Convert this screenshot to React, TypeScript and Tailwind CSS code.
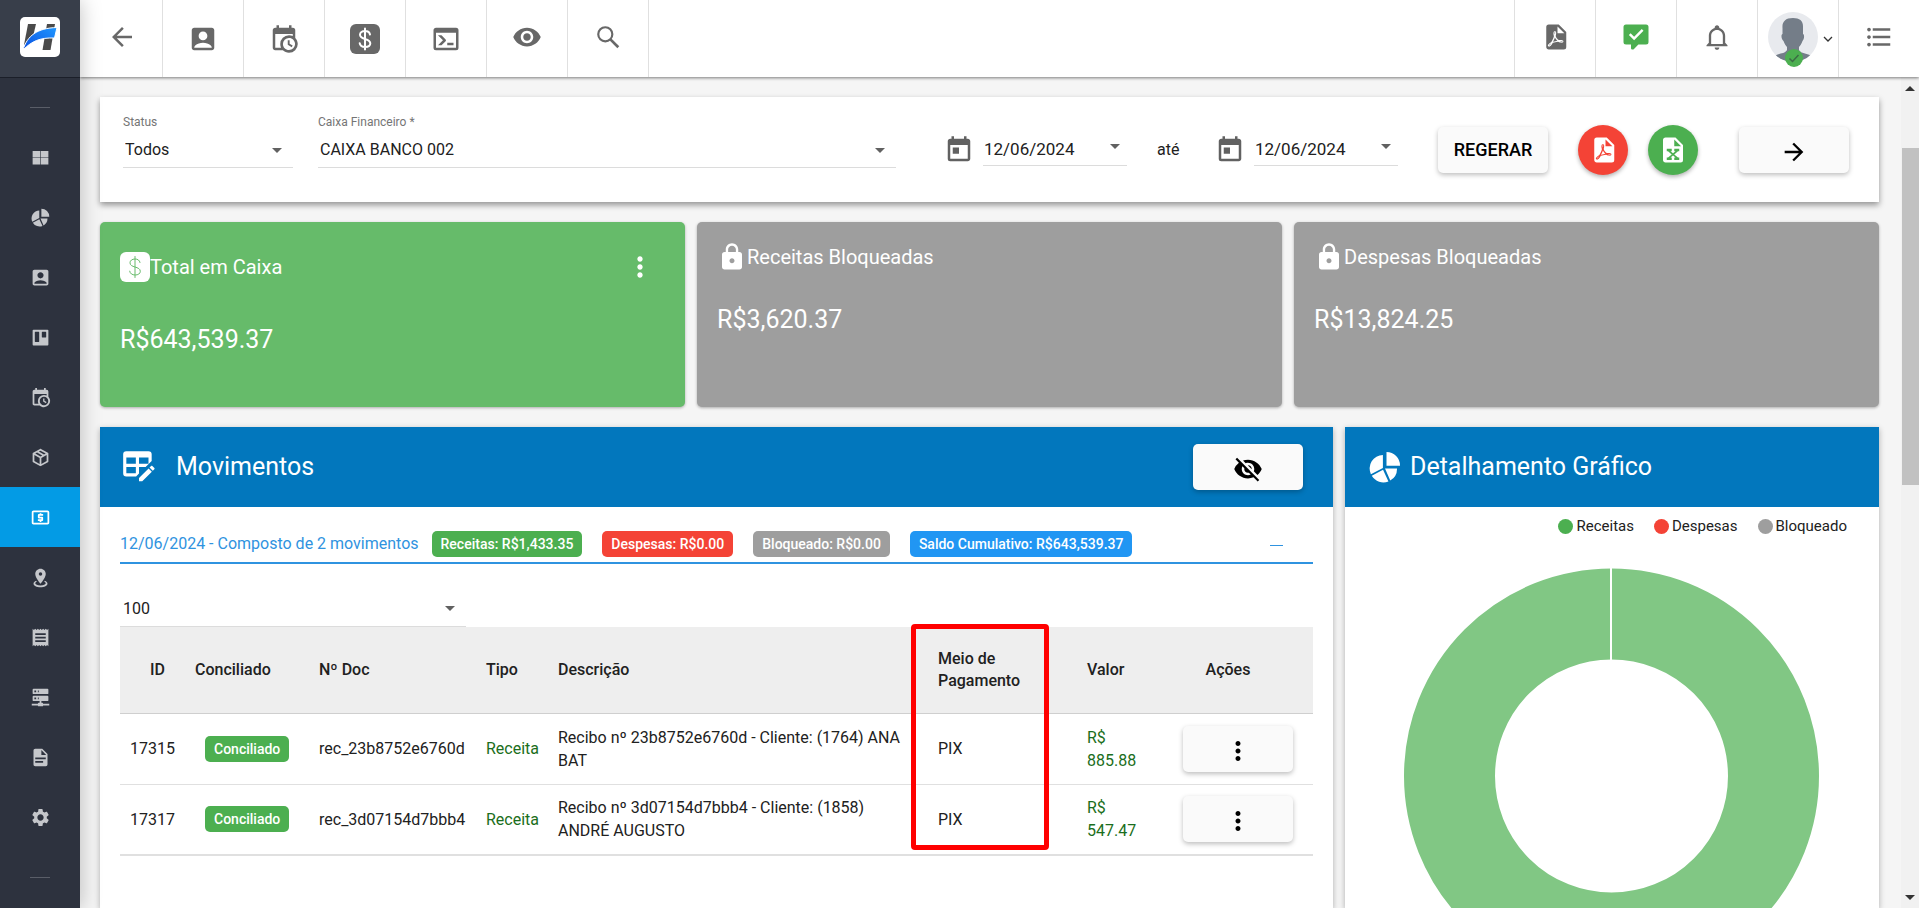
import { ReactNode, useState } from "react";
import {
    MdAccountBox,
    MdArrowBack,
    MdArrowDropDown,
    MdArrowForward,
    MdFormatListBulleted,
    MdLocalAtm,
    MdLock,
    MdMoreVert,
    MdReceipt,
    MdSettings,
    MdToday,
    MdVisibility,
    MdVisibilityOff,
} from "react-icons/md";

const paths = {
    calendarClock: "M15,13H16.5V15.82L18.94,17.23L18.19,18.53L15,16.69V13M19,8H5V19H9.67C9.24,18.09 9,17.07 9,16A7,7 0 0,1 16,9C17.07,9 18.09,9.24 19,9.67V8M5,21C3.89,21 3,20.1 3,19V5C3,3.89 3.89,3 5,3H6V1H8V3H16V1H18V3H19A2,2 0 0,1 21,5V11.1C22.24,12.36 23,14.09 23,16A7,7 0 0,1 16,23C14.09,23 12.36,22.24 11.1,21H5M16,11.15A4.85,4.85 0 0,0 11.15,16C11.15,18.68 13.32,20.85 16,20.85A4.85,4.85 0 0,0 20.85,16C20.85,13.32 18.68,11.15 16,11.15Z",
    console: "M20,19V7H4V19H20M20,3A2,2 0 0,1 22,5V19A2,2 0 0,1 20,21H4A2,2 0 0,1 2,19V5C2,3.89 2.9,3 4,3H20M13,17V15H18V17H13M9.58,13L5.57,9H8.4L11.7,12.3C12.09,12.69 12.09,13.33 11.7,13.72L8.42,17H5.59L9.58,13Z",
    pdf: "M14,9H19.5L14,3.5V9M7,2H15L21,8V20A2,2 0 0,1 19,22H7C5.89,22 5,21.1 5,20V4A2,2 0 0,1 7,2M11.93,12.44C12.34,13.34 12.86,14.08 13.46,14.59L13.87,14.91C13,15.07 11.8,15.35 10.53,15.84V15.84L10.42,15.88L10.92,14.84C11.37,13.97 11.7,13.18 11.93,12.44M18.41,16.25C18.59,16.07 18.68,15.84 18.69,15.59C18.72,15.39 18.67,15.2 18.57,15.04C18.28,14.57 17.53,14.35 16.29,14.35L15,14.42L14.13,13.84C13.5,13.32 12.93,12.41 12.53,11.28L12.57,11.14C12.9,9.81 13.21,8.2 12.55,7.54C12.39,7.38 12.17,7.3 11.94,7.3H11.7C11.33,7.3 11,7.69 10.91,8.07C10.54,9.4 10.76,10.13 11.13,11.34V11.35C10.88,12.23 10.56,13.25 10.05,14.28L9.09,16.08L8.2,16.57C7,17.32 6.43,18.16 6.32,18.69C6.28,18.88 6.3,19.05 6.37,19.23L6.4,19.28L6.88,19.59L7.32,19.7C8.13,19.7 9.05,18.75 10.29,16.63L10.47,16.56C11.5,16.23 12.78,16 14.5,15.81C15.53,16.32 16.74,16.55 17.5,16.55C17.94,16.55 18.24,16.44 18.41,16.25M18,15.54L18.09,15.65C18.08,15.75 18.05,15.76 18,15.78H17.96L17.77,15.8C17.31,15.8 16.6,15.61 15.87,15.29C15.96,15.19 16,15.19 16.1,15.19C17.5,15.19 17.9,15.44 18,15.54M8.83,17C8.18,18.19 7.59,18.85 7.14,19C7.19,18.62 7.64,17.96 8.35,17.31L8.83,17M11.85,10.09C11.62,9.19 11.61,8.46 11.78,8.04L11.85,7.92L12,7.97C12.17,8.21 12.19,8.53 12.09,9.07L12.06,9.23L11.9,10.05L11.85,10.09Z",
    excel: "M13,9H18.5L13,3.5V9M6,2H14L20,8V20A2,2 0 0,1 18,22H6C4.89,22 4,21.1 4,20V4C4,2.89 4.89,2 6,2M17,11H13V13H14L12,14.67L10,13H11V11H7V13H8L11,15.5L8,18H7V20H11V18H10L12,16.33L14,18H13V20H17V18H16L13,15.5L16,13H17V11Z",
    document: "M13,9H18.5L13,3.5V9M6,2H14L20,8V20A2,2 0 0,1 18,22H6C4.89,22 4,21.1 4,20V4C4,2.89 4.89,2 6,2M15,18V16H6V18H15M18,14V12H6V14H18Z",
    messageCheck: "M4,2H20A2,2 0 0,1 22,4V16A2,2 0 0,1 20,18H13.9L10.2,21.7C10,21.9 9.75,22 9.5,22H9A1,1 0 0,1 8,21V18H4A2,2 0 0,1 2,16V4A2,2 0 0,1 4,2M16.6,5.5L10.5,11.7L7.7,8.9L6.3,10.3L10.5,14.5L18,6.9Z",
    bell: "M10 21H14C14 22.1 13.1 23 12 23S10 22.1 10 21M21 19V20H3V19L5 17V11C5 7.9 7 5.2 10 4.3V4C10 2.9 10.9 2 12 2S14 2.9 14 4V4.3C17 5.2 19 7.9 19 11V17L21 19M17 11C17 8.2 14.8 6 12 6S7 8.2 7 11V18H17V11Z",
    pie: "M13 2V11.2H22A9 9 0 0 0 13 2ZM10.6 4A9 9 0 0 0 2.6 16.8L10.6 12.6ZM3.2 17.9A9 9 0 0 0 14.3 21.6L10.7 13.9ZM15.5 21A9 9 0 0 0 20 13H12Z",
    windows: "M3,4.500H11.600V11.700H3V4.500M12.300,4.500H21V11.700H12.300V4.500M3,12.300H11.600V20H3V12.300M12.300,12.300H21V20H12.300V12.300Z",
    board: "M4,3H20A1,1 0 0,1 21,4V20A1,1 0 0,1 20,21H4A1,1 0 0,1 3,20V4A1,1 0 0,1 4,3M6,5.5A.5,.5 0 0,0 5.5,6V16.5A.5,.5 0 0,0 6,17H10A.5,.5 0 0,0 10.5,16.5V6A.5,.5 0 0,0 10,5.5H6M14,5.5A.5,.5 0 0,0 13.5,6V11.5A.5,.5 0 0,0 14,12H18A.5,.5 0 0,0 18.5,11.5V6A.5,.5 0 0,0 18,5.5H14Z",
    box: "M21,16.5C21,16.88 20.79,17.21 20.47,17.38L12.57,21.82C12.41,21.94 12.21,22 12,22C11.79,22 11.59,21.94 11.43,21.82L3.53,17.38C3.21,17.21 3,16.88 3,16.5V7.5C3,7.12 3.21,6.79 3.53,6.62L11.43,2.18C11.59,2.06 11.79,2 12,2C12.21,2 12.41,2.06 12.57,2.18L20.47,6.62C20.79,6.79 21,7.12 21,7.5V16.5M12,4.15L10.11,5.22L16,8.61L17.96,7.5L12,4.15M6.04,7.5L12,10.85L13.96,9.75L8.08,6.35L6.04,7.5M5,15.91L11,19.29V12.58L5,9.21V15.91M19,15.91V9.21L13,12.58V19.29L19,15.91Z",
    marker: "M12,2C15.31,2 18,4.66 18,7.95C18,12.41 12,19 12,19C12,19 6,12.41 6,7.95C6,4.66 8.69,2 12,2M12,6A2,2 0 0,0 10,8A2,2 0 0,0 12,10A2,2 0 0,0 14,8A2,2 0 0,0 12,6M20,19C20,21.21 16.42,23 12,23C7.58,23 4,21.21 4,19C4,17.71 5.22,16.56 7.11,15.83L7.75,16.74C6.67,17.19 6,17.81 6,18.5C6,19.88 8.69,21 12,21C15.31,21 18,19.88 18,18.5C18,17.81 17.33,17.19 16.25,16.74L16.89,15.83C18.78,16.56 20,17.71 20,19Z",
    server: "M13,18H14A1,1 0 0,1 15,19H22V21H15A1,1 0 0,1 14,22H10A1,1 0 0,1 9,21H2V19H9A1,1 0 0,1 10,18H11V16H4A1,1 0 0,1 3,15V11A1,1 0 0,1 4,10H20A1,1 0 0,1 21,11V15A1,1 0 0,1 20,16H13V18M4,2H20A1,1 0 0,1 21,3V7A1,1 0 0,1 20,8H4A1,1 0 0,1 3,7V3A1,1 0 0,1 4,2M9,6H10V4H9V6M9,14H10V12H9V14M5,4V6H7V4H5M5,12V14H7V12H5Z",
    tableEdit: "M21.7,13.35L20.7,14.35L18.65,12.3L19.65,11.3C19.86,11.08 20.21,11.08 20.42,11.3L21.7,12.58C21.92,12.79 21.92,13.14 21.7,13.35M12,18.94L18.07,12.88L20.12,14.93L14.06,21H12V18.94M4,2H18A2,2 0 0,1 20,4V8.17L16.17,12H12V16.17L10.17,18H4A2,2 0 0,1 2,16V4A2,2 0 0,1 4,2M4,6V10H10V6H4M12,6V10H18V6H12M4,12V16H10V12H4Z",
}

function Icon({ d, className }: { d: string, className: string }) {
    return (
        <svg viewBox="0 0 24 24" fill="currentColor" fillRule="evenodd" className={className} aria-hidden="true">
            <path d={d} />
        </svg>
    )
}

// rounded square with a dollar sign, shared by the top bar and the balance card
function DollarBox({ stroke, width, className }: { stroke: string, width: number, className: string }) {
    return (
        <svg viewBox="0 0 30 30" className={className} aria-hidden="true">
            <rect width="30" height="30" rx="6" fill="currentColor" />
            <path
                d="M20 10.5C19.6 8.2 17.6 7 15 7C12.2 7 10 8.5 10 10.8C10 13.3 12.3 14.2 15 15C17.9 15.9 20.3 16.8 20.3 19.3C20.3 21.7 18 23 15.2 23C12.2 23 10 21.6 9.7 19.2M15 4.5V25.5"
                fill="none"
                stroke={stroke}
                strokeWidth={width}
                strokeLinecap="round"
            />
        </svg>
    )
}

function Logo() {
    return (
        <svg viewBox="0 0 40 40" className="size-10" aria-label="Logo" role="img">
            <defs>
                <linearGradient id="swoosh" x1="0" y1="1" x2="1" y2="0">
                    <stop offset="0" stopColor="#0b4fe0" />
                    <stop offset="1" stopColor="#1f97ff" />
                </linearGradient>
            </defs>
            <rect width="40" height="40" rx="5" fill="#fff" />
            <path d="M8 7H16L12 24L4 28Z" fill="#4a4a4a" />
            <path d="M27 7H35L30.5 33H22.5Z" fill="#4a4a4a" />
            <path d="M3 33C7 19 17 11 37 10.500L34.500 21C20 20.500 12 24 3 33Z" fill="url(#swoosh)" stroke="#fff" strokeWidth="1" />
        </svg>
    )
}

function Avatar() {
    return (
        <span className="relative block size-[50px]">
            <svg viewBox="0 0 50 50" className="size-[50px]" aria-hidden="true">
                <clipPath id="face"><circle cx="25" cy="25" r="25" /></clipPath>
                <circle cx="25" cy="25" r="25" fill="#e8eaee" />
                <g clipPath="url(#face)" fill="#747d88">
                    <path d="M25 6C17 6 14 10 14.5 16V22C13 22 13 27 15.5 29C16.5 32 18 34 19 35V38C17 42 11 41 7.5 43.5C11 48 18 50 25 50C32 50 39 48 42.5 43.5C39 41 33 42 31 38V35C32 34 33.5 32 34.5 29C36.5 27 36.5 22 35 22V16C35.5 9 32 6 25 6Z" />
                </g>
            </svg>
            <svg viewBox="0 0 18 18" className="absolute -bottom-[5px] left-[17px] size-[18px]" aria-hidden="true">
                <circle cx="9" cy="9" r="9" fill="#4caf50" />
                <path d="M4.5 9.5L7.5 12.5L13.5 6" fill="none" stroke="#3b6b45" strokeWidth="1.5" />
            </svg>
        </span>
    )
}

const shortcuts = [
    { label: "Voltar", icon: <MdArrowBack className="mb-[3px] size-[30px]" /> },
    { label: "Contatos", icon: <MdAccountBox className="mt-px size-[30px]" /> },
    { label: "Agenda", icon: <Icon d={paths.calendarClock} className="mt-px size-[30px]" /> },
    { label: "Caixa", icon: <DollarBox stroke="#fff" width={2} className="mt-px size-[30px]" /> },
    { label: "Console", icon: <Icon d={paths.console} className="mt-px size-[30px]" /> },
    { label: "Visualizar", icon: <MdVisibility className="mb-[3px] size-[30px]" /> },
    {
        label: "Pesquisar",
        icon: (
            <svg viewBox="0 0 24 24" className="mb-[3px] size-[26px]" fill="none" stroke="currentColor" strokeWidth="2" aria-hidden="true">
                <circle cx="9.5" cy="9.5" r="6.5" />
                <path d="M14 14L21.5 21.5" strokeWidth="2.5" />
            </svg>
        ),
    },
]

const menu = [
    { label: "Painel", icon: <Icon d={paths.windows} className="size-[21px]" /> },
    { label: "Relatórios", icon: <Icon d={paths.pie} className="size-[21px]" /> },
    { label: "Clientes", icon: <MdAccountBox className="size-[21px]" /> },
    { label: "Quadros", icon: <Icon d={paths.board} className="size-[21px]" /> },
    { label: "Agenda", icon: <Icon d={paths.calendarClock} className="size-[21px]" /> },
    { label: "Produtos", icon: <Icon d={paths.box} className="size-[21px]" /> },
    { label: "Financeiro", icon: <MdLocalAtm className="size-[21px]" />, active: true },
    { label: "Locais", icon: <Icon d={paths.marker} className="size-[21px]" /> },
    { label: "Recibos", icon: <MdReceipt className="size-[21px]" /> },
    { label: "Rede", icon: <Icon d={paths.server} className="size-[21px]" /> },
    { label: "Documentos", icon: <Icon d={paths.document} className="size-[21px]" /> },
    { label: "Configurações", icon: <MdSettings className="size-[21px]" /> },
]

const movimentos = [
    { id: 17315, doc: "rec_23b8752e6760d", descricao: "Recibo nº 23b8752e6760d - Cliente: (1764) ANA BAT", valor: "R$ 885.88" },
    { id: 17317, doc: "rec_3d07154d7bbb4", descricao: "Recibo nº 3d07154d7bbb4 - Cliente: (1858) ANDRÉ AUGUSTO", valor: "R$ 547.47" },
]

const raised = "flex h-[46px] w-[110px] shrink-0 items-center justify-center rounded-[5px] bg-[#fafafa] text-black shadow-[0_2px_5px_rgba(0,0,0,0.26)]"

function Sidebar() {
    return (
        <aside className="z-20 flex w-20 shrink-0 flex-col bg-[#2d323e] shadow-[0_0_20px_rgba(0,0,0,0.25)]">
            <div className="flex h-[78px] shrink-0 items-center justify-center border-b border-[#1b1f29] bg-[#383e4a] pb-1">
                <Logo />
            </div>
            <nav className="flex flex-col items-center">
                <div className="mt-[29px] mb-[19px] h-px w-5 bg-[#5a5e68]" />
                {menu.map((item) => (
                    <a
                        key={item.label}
                        href="#"
                        aria-label={item.label}
                        className={item.active
                            ? "flex h-15 w-full items-center justify-center bg-[#039be5] text-white"
                            : "flex h-15 w-full items-center justify-center text-[#c5c7cb]"}
                    >
                        {item.icon}
                    </a>
                ))}
                <div className="mt-[30px] h-px w-5 bg-[#5a5e68]" />
            </nav>
        </aside>
    )
}

function TopBar() {
    const cell = "flex h-full w-[81px] items-center justify-center border-[#e0e0e0]"
    return (
        <header className="z-10 flex h-[77px] shrink-0 justify-between bg-white pl-0.5 text-[#686868] shadow-[0_1px_3px_rgba(0,0,0,0.5)]">
            <div className="flex">
                {shortcuts.map((item) => (
                    <button key={item.label} aria-label={item.label} className={`${cell} border-r`}>{item.icon}</button>
                ))}
            </div>
            <div className="flex">
                <button aria-label="Exportar PDF" className={`${cell} border-l`}><Icon d={paths.pdf} className="mb-[3px] size-[30px]" /></button>
                <button aria-label="Mensagens" className={`${cell} border-l text-[#4caf50]`}><Icon d={paths.messageCheck} className="mb-[3px] size-[30px]" /></button>
                <button aria-label="Notificações" className={`${cell} border-l`}><Icon d={paths.bell} className="mb-[3px] size-[28px]" /></button>
                <button aria-label="Perfil" className={`${cell} gap-[5px] border-l pl-1`}>
                    <span className="mb-[3px]"><Avatar /></span>
                    <svg viewBox="0 0 10 6" className="h-1.5 w-2.5" fill="none" stroke="#333" strokeWidth="1.3" aria-hidden="true"><path d="M1 1L5 5L9 1" /></svg>
                </button>
                <button aria-label="Lista" className={`${cell} border-l`}><MdFormatListBulleted className="mb-[3px] size-[30px]" /></button>
            </div>
        </header>
    )
}

function Field({ id, label, option, className }: { id: string, label: string, option: string, className: string }) {
    return (
        <div className={className}>
            <label htmlFor={id} className="block pt-[18px] text-xs leading-[14px] text-[#757575]">{label}</label>
            <div className="relative mt-[3px] border-b border-[#dcdcdc]">
                <select id={id} className="h-[35px] w-full appearance-none bg-transparent pl-0.5 text-base leading-5 outline-none">
                    <option>{option}</option>
                </select>
                <MdArrowDropDown className="pointer-events-none absolute top-1.5 right-1 size-6 text-[#616161]" />
            </div>
        </div>
    )
}

function DateField({ label }: { label: string }) {
    const [value, setValue] = useState("12/06/2024")
    return (
        <div className="flex items-center gap-[9px]">
            <MdToday className="size-[30px] text-[#616161]" />
            <div className="flex h-8 w-36 items-start justify-between border-b border-[#dcdcdc]">
                <input aria-label={label} value={value} onChange={(e) => setValue(e.target.value)} className="h-[30px] w-28 bg-transparent pl-px text-[17px] outline-none" />
                <button aria-label="Abrir calendário" className="h-6 text-[#616161]"><MdArrowDropDown className="size-6" /></button>
            </div>
        </div>
    )
}

function Filters() {
    return (
        <section className="flex h-[105px] bg-white pr-[30px] pl-[23px] shadow-[0_3px_6px_rgba(0,0,0,0.4)]">
            <Field id="status" label="Status" option="Todos" className="w-[170px]" />
            <Field id="caixa" label="Caixa Financeiro *" option="CAIXA BANCO 002" className="ml-[25px] flex-1" />
            <div className="ml-12 flex items-center">
                <DateField label="Data inicial" />
                <span className="w-[88px] pl-[30px] text-base">até</span>
                <DateField label="Data final" />
                <button className={`${raised} ml-10 text-lg font-medium`}>REGERAR</button>
                <button aria-label="Gerar PDF" className="ml-[30px] flex size-[50px] items-center justify-center rounded-full bg-[#f44336] text-white shadow-[0_2px_4px_rgba(0,0,0,0.3)]">
                    <Icon d={paths.pdf} className="size-[30px]" />
                </button>
                <button aria-label="Gerar Excel" className="ml-5 flex size-[50px] items-center justify-center rounded-full bg-[#4caf50] text-white shadow-[0_2px_4px_rgba(0,0,0,0.3)]">
                    <Icon d={paths.excel} className="size-[30px]" />
                </button>
                <button aria-label="Avançar" className={`${raised} ml-[41px] pt-1`}><MdArrowForward className="size-7" /></button>
            </div>
        </section>
    )
}

function SummaryCard({ title, value, icon, color, menu }: { title: string, value: string, icon: ReactNode, color: string, menu?: boolean }) {
    return (
        <div className={`h-[185px] rounded-[5px] p-5 text-white shadow-[0_1px_3px_rgba(0,0,0,0.3)] ${color}`}>
            <div className="flex items-center">
                {icon}
                <h2 className="flex-1 text-xl leading-[30px]">{title}</h2>
                {menu && (
                    <button aria-label="Mais opções" className="flex size-[50px] items-center justify-center"><MdMoreVert className="size-8" /></button>
                )}
            </div>
            <p className="mt-8 text-[25px] leading-8">{value}</p>
        </div>
    )
}

function Badge({ children, className }: { children: ReactNode, className: string }) {
    return <span className={`inline-block rounded-[5px] px-[9px] text-sm leading-[26px] font-medium text-white ${className}`}>{children}</span>
}

function Movimentos() {
    return (
        <section className="min-w-0 flex-1 bg-white shadow-[0_2px_6px_rgba(0,0,0,0.3)]">
            <div className="flex h-20 items-center bg-[#0277bd] pr-[30px] pl-5 text-white">
                <Icon d={paths.tableEdit} className="size-[38px]" />
                <h2 className="ml-[18px] flex-1 text-[25px]">Movimentos</h2>
                <button aria-label="Ocultar" className={raised}><MdVisibilityOff className="mt-1 size-[30px]" /></button>
            </div>
            <div className="px-5 pt-6">
                <div className="flex items-start border-b-2 border-[#2f93e0] pb-[5px] text-[#2f93e0]">
                    <span className="mr-[13px] leading-[26px]">12/06/2024 - Composto de 2 movimentos</span>
                    <div className="flex gap-5">
                        <Badge className="bg-[#4caf50]">Receitas: R$1,433.35</Badge>
                        <Badge className="bg-[#f44336]">Despesas: R$0.00</Badge>
                        <Badge className="bg-[#9e9e9e]">Bloqueado: R$0.00</Badge>
                        <Badge className="bg-[#2196f3]">Saldo Cumulativo: R$643,539.37</Badge>
                    </div>
                    <button aria-label="Recolher" className="mr-[30px] ml-auto flex h-[26px] items-center pt-0.5"><span className="h-px w-[13px] bg-[#2f93e0]" /></button>
                </div>
                <div className="relative mt-7 w-[346px] border-b border-[#dcdcdc]">
                    <select aria-label="Itens por página" className="h-[34px] w-full appearance-none bg-transparent pl-[3px] text-base outline-none">
                        <option>100</option>
                    </select>
                    <MdArrowDropDown className="pointer-events-none absolute top-1 right-1 size-6 text-[#616161]" />
                </div>
                <div className="relative">
                    <table className="w-full table-fixed border-b-2 border-[#e0e0e0] text-left">
                        <colgroup>
                            <col className="w-[65px]" />
                            <col className="w-[124px]" />
                            <col className="w-[167px]" />
                            <col className="w-[72px]" />
                            <col />
                            <col className="w-[149px]" />
                            <col className="w-[96px]" />
                            <col className="w-[140px]" />
                        </colgroup>
                        <thead>
                            <tr className="h-[86px] border-b border-[#cfcfcf] bg-[#eeeeee] leading-[22px]">
                                <th className="pr-5 text-right font-medium">ID</th>
                                <th className="px-2.5 font-medium">Conciliado</th>
                                <th className="px-2.5 font-medium">Nº Doc</th>
                                <th className="px-2.5 font-medium">Tipo</th>
                                <th className="px-2.5 font-medium">Descrição</th>
                                <th className="px-2.5 pr-10 font-medium">Meio de Pagamento</th>
                                <th className="px-2.5 font-medium">Valor</th>
                                <th className="pr-[30px] text-center font-medium">Ações</th>
                            </tr>
                        </thead>
                        <tbody>
                            {movimentos.map((mov) => (
                                <tr key={mov.id} className="h-[71px] border-b border-[#e0e0e0] leading-[23px]">
                                    <td className="pr-2.5 text-right">{mov.id}</td>
                                    <td className="pl-5"><Badge className="bg-[#4caf50]">Conciliado</Badge></td>
                                    <td className="px-2.5">{mov.doc}</td>
                                    <td className="px-2.5 text-[#1b6e20]">Receita</td>
                                    <td className="px-2.5">{mov.descricao}</td>
                                    <td className="px-2.5">PIX</td>
                                    <td className="px-2.5 pr-7 text-[#1b6e20]">{mov.valor}</td>
                                    <td className="pl-2.5"><button aria-label="Ações do movimento" className={`${raised} pt-1`}><MdMoreVert className="size-[30px]" /></button></td>
                                </tr>
                            ))}
                        </tbody>
                    </table>
                    <div className="pointer-events-none absolute -top-[3px] right-[264px] bottom-1.5 w-[138px] rounded-sm border-[5px] border-[#ff0000]" />
                </div>
            </div>
        </section>
    )
}

function Detalhamento() {
    return (
        <section className="w-[534px] shrink-0 bg-white shadow-[0_2px_6px_rgba(0,0,0,0.3)]">
            <div className="flex h-20 items-center bg-[#0277bd] pl-[22px] text-white">
                <Icon d={paths.pie} className="size-[36px]" />
                <h2 className="ml-[7px] text-[25px]">Detalhamento Gráfico</h2>
            </div>
            <ul className="flex justify-end gap-5 pt-[9px] pr-8 text-[15px] leading-5">
                <li className="flex items-center gap-[3px]"><span className="size-[15px] rounded-full bg-[#4caf50]" />Receitas</li>
                <li className="flex items-center gap-[3px]"><span className="size-[15px] rounded-full bg-[#f44336]" />Despesas</li>
                <li className="flex items-center gap-[3px]"><span className="size-[15px] rounded-full bg-[#9e9e9e]" />Bloqueado</li>
            </ul>
            <svg viewBox="0 0 416 416" className="mx-auto mt-8 size-[416px]" role="img" aria-label="Receitas 100%">
                <circle cx="207.5" cy="208" r="162" fill="none" stroke="#81c784" strokeWidth="91" />
                <path d="M207 0V92" stroke="#fff" strokeWidth="2" />
            </svg>
        </section>
    )
}

function Scrollbar() {
    return (
        <div className="flex w-[18px] shrink-0 flex-col items-center bg-[#f1f1f1] pt-[9px]" aria-hidden="true">
            <svg viewBox="0 0 10 5" className="h-[5px] w-2.5"><path d="M0 5L5 0L10 5Z" fill="#333" /></svg>
            <div className="mt-[57px] h-[337px] w-[17px] bg-[#c1c1c1]" />
            <svg viewBox="0 0 10 5" className="mt-auto mb-2 h-[5px] w-2.5"><path d="M0 0L5 5L10 0Z" fill="#333" /></svg>
        </div>
    )
}

export default function App() {
    return (
        <div className="flex h-screen overflow-hidden bg-[#f5f5f5] text-base text-[#212121] [font-family:Roboto,sans-serif]">
            <Sidebar />
            <div className="flex min-w-0 flex-1 flex-col">
                <TopBar />
                <div className="flex min-h-0 flex-1">
                    <main className="flex min-w-0 flex-1 flex-col gap-5 overflow-hidden pt-5 pr-[22px] pl-5">
                        <Filters />
                        <div className="grid grid-cols-3 gap-3">
                            <SummaryCard
                                title="Total em Caixa"
                                value="R$643,539.37"
                                color="bg-[#66bb6a]"
                                icon={<DollarBox stroke="#66bb6a" width={1} className="size-[30px]" />}
                                menu
                            />
                            <SummaryCard title="Receitas Bloqueadas" value="R$3,620.37" color="bg-[#9e9e9e]" icon={<MdLock className="size-[30px]" />} />
                            <SummaryCard title="Despesas Bloqueadas" value="R$13,824.25" color="bg-[#9e9e9e]" icon={<MdLock className="size-[30px]" />} />
                        </div>
                        <div className="flex min-h-0 flex-1 gap-3">
                            <Movimentos />
                            <Detalhamento />
                        </div>
                    </main>
                    <Scrollbar />
                </div>
            </div>
        </div>
    )
}
